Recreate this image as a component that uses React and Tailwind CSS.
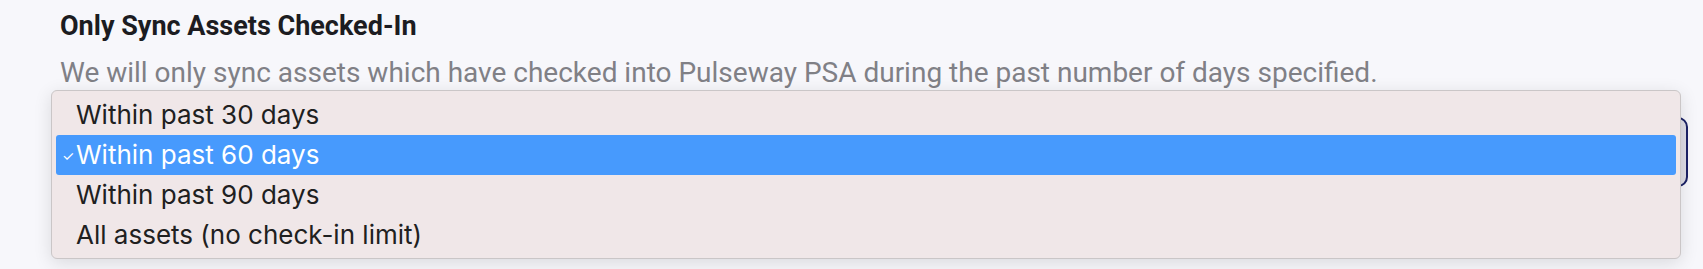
const options = [
  "Within past 30 days",
  "Within past 60 days",
  "Within past 90 days",
  "All assets (no check-in limit)",
];

export default function App() {
  const selected = 1;

  return (
    <div className="relative h-[269px] w-full overflow-hidden bg-[#f7f7fb] pl-[60px] pr-[15px] pt-[10px]">
      <h2 className="font-['Roboto',sans-serif] text-[27px] font-bold leading-[32px] text-[#1c1c21]">
        Only Sync Assets Checked-In
      </h2>
      <p className="mt-[14px] font-['Roboto',sans-serif] text-[28px] leading-[34px] text-[#808086]">
        We will only sync assets which have checked into Pulseway PSA during the past number of days specified.
      </p>

      {/* the select underneath, mostly hidden by the open list */}
      <div className="mt-[27px] h-[70px] w-full rounded-[10px] border-2 border-[#1b2266] bg-[#dedde5]" />

      {/* open option list */}
      <ul className="absolute left-[51px] top-[90px] w-[1630px] rounded-[6px] border border-[#cac6c7] bg-[#f0e7e8] px-[4px] pb-[3px] pt-[4px] font-['Inter',sans-serif] text-[26px] leading-[40px] text-[#202020] shadow-[0_4px_18px_rgba(0,0,0,0.12)]">
        {options.map((o, i) => (
          <li
            key={o}
            className={
              i === selected
                ? "relative rounded-[3px] bg-[#479afd] pl-[20px] text-white"
                : "relative pl-[20px]"
            }
          >
            {i === selected && (
              <span className="absolute left-[6px] top-0 text-[14px] leading-[42px]">✓</span>
            )}
            {o}
          </li>
        ))}
      </ul>
    </div>
  );
}
